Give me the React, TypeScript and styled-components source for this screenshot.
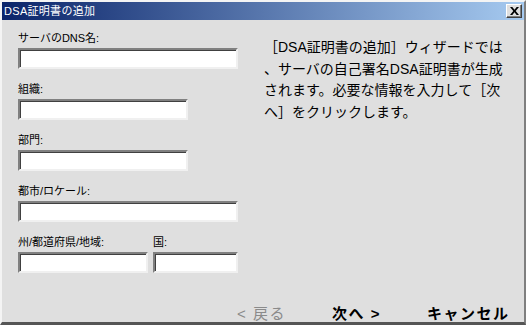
import styled, { createGlobalStyle } from 'styled-components'

const GlobalStyle = createGlobalStyle`
	html, body {
		margin: 0;
		padding: 0;
		background: #dfdfdf;
	}
	* {
		box-sizing: border-box;
	}
`

const jp = `"Liberation Sans", "Noto Sans CJK JP", sans-serif`

export default function App(): JSX.Element {
	return (
		<>
			<GlobalStyle />
			<Window>
				<TitleBar>
					<Title>DSA証明書の追加</Title>
					<CloseBtn aria-label="閉じる">
						<svg width="9" height="8" viewBox="0 0 9 8">
							<path d="M0 0h2.3l2.2 2.8L6.7 0H9L5.7 4 9 8H6.7L4.5 5.2 2.3 8H0l3.3-4z" fill="#000" />
						</svg>
					</CloseBtn>
				</TitleBar>

				<Body>
					<FormColumn>
						<Field>
							<Label>サーバのDNS名:</Label>
							<TextBox $width={220} />
						</Field>
						<Field>
							<Label>組織:</Label>
							<TextBox $width={170} />
						</Field>
						<Field>
							<Label>部門:</Label>
							<TextBox $width={170} />
						</Field>
						<Field>
							<Label>都市/ロケール:</Label>
							<TextBox $width={220} />
						</Field>
						<Row>
							<Field>
								<Label>州/都道府県/地域:</Label>
								<TextBox $width={130} />
							</Field>
							<Field>
								<Label>国:</Label>
								<TextBox $width={85} />
							</Field>
						</Row>
					</FormColumn>

					<Description>
						<Line>［DSA証明書の追加］ウィザードでは</Line>
						<Line>、サーバの自己署名DSA証明書が生成</Line>
						<Line>されます。必要な情報を入力して［次</Line>
						<Line>へ］をクリックします。</Line>
					</Description>
				</Body>

				<Footer>
					<NavButton $disabled>&lt; 戻る</NavButton>
					<NavButton>次へ &gt;</NavButton>
					<NavButton>キャンセル</NavButton>
				</Footer>
			</Window>
		</>
	)
}

const Window = styled.div`
	width: 526px;
	height: 325px;
	display: flex;
	flex-direction: column;
	background: #dfdfdf;
	border-top: 2px solid #f4f4f4;
	border-left: 2px solid #f4f4f4;
	border-right: 2px solid #7f7f7f;
	border-bottom: 3px solid #555555;
	font-family: ${jp};
`
const TitleBar = styled.div`
	height: 18px;
	display: flex;
	align-items: center;
	justify-content: space-between;
	padding: 0 2px 0 2px;
	background: linear-gradient(to right, #0a246a, #a6caf0);
`
const Title = styled.span`
	color: #fff;
	font-size: 11px;
	line-height: 18px;
	letter-spacing: 0.3px;
`
const CloseBtn = styled.button`
	width: 16px;
	height: 14px;
	padding: 0;
	display: flex;
	align-items: center;
	justify-content: center;
	background: #dfdfdf;
	border: 1px solid;
	border-color: #fff #404040 #404040 #fff;
	box-shadow: inset -1px -1px 0 #808080;
`
const Body = styled.div`
	flex: 1;
	display: flex;
	padding: 11px 0 0 16px;
`
const FormColumn = styled.div`
	width: 244px;
	display: flex;
	flex-direction: column;
`
const Field = styled.div`
	display: flex;
	flex-direction: column;
	margin-bottom: 13px;
`
const Row = styled.div`
	display: flex;
	gap: 5px;
`
const Label = styled.label`
	font-size: 11px;
	line-height: 15px;
	height: 15px;
	margin-bottom: 2px;
	color: #000;
`
const TextBox = styled.input<{ $width: number }>`
	width: ${(p) => p.$width}px;
	height: 21px;
	background: #fff;
	border: 2px solid;
	border-color: #808080 #f0f0f0 #f0f0f0 #808080;
	box-shadow: inset 1px 1px 0 #404040;
	outline: none;
`
const Description = styled.div`
	padding: 6px 0 0 2px;
	font-size: 14px;
	line-height: 21.5px;
	color: #000;
`
const Line = styled.div`
	white-space: nowrap;
`
const Footer = styled.div`
	height: 28px;
	display: flex;
	align-items: center;
	padding: 8px 0 0 235px;
`
const NavButton = styled.span<{ $disabled?: boolean }>`
	width: 95px;
	font-size: 15px;
	letter-spacing: 1.5px;
	color: ${(p) => (p.$disabled ? '#8a8a8a' : '#000')};
	font-weight: ${(p) => (p.$disabled ? 'normal' : 'bold')};
	white-space: nowrap;
`
